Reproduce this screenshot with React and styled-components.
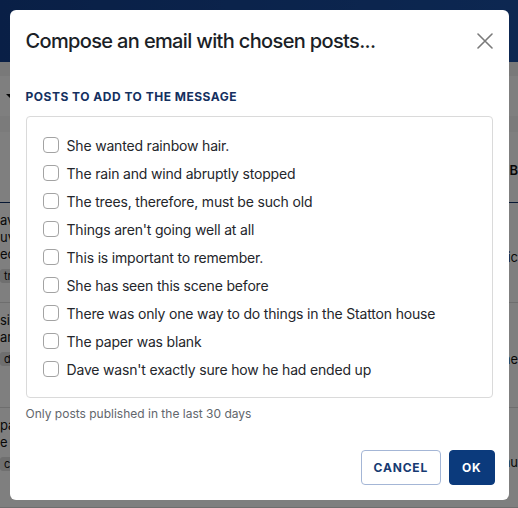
import React from 'react';
import styled, { createGlobalStyle } from 'styled-components';

const GlobalStyle = createGlobalStyle`
  html, body {
    margin: 0;
    padding: 0;
    height: 100%;
    overflow: hidden;
  }
  body {
    font-family: Inter, "Noto Sans", "Liberation Sans", sans-serif;
    background: #ffffff;
  }
`;

const posts = [
  'She wanted rainbow hair.',
  'The rain and wind abruptly stopped',
  'The trees, therefore, must be such old',
  "Things aren't going well at all",
  'This is important to remember.',
  'She has seen this scene before',
  'There was only one way to do things in the Statton house',
  'The paper was blank',
  "Dave wasn't exactly sure how he had ended up",
];

const rows = [
  { lines: ['avatars in the', 'uvula of the', 'eclipse'], tag: 'travel', right: 'ic' },
  { lines: ['sipping tea', 'arrived'], tag: 'd', right: 'ne' },
  { lines: ['pack the bags', 'e classic'], tag: 'cr', right: 'nu' },
];

/* page behind the dialog */
const Page = styled.div`
  width: 518px;
  height: 508px;
  background: #f4f4f4;
  display: flex;
  flex-direction: column;
`;

const TopBar = styled.header`
  height: 62px;
  flex-shrink: 0;
  background: linear-gradient(90deg, #133f8c, #1a4fa3);
`;

const Toolbar = styled.div`
  height: 44px;
  border-top: 14px solid #f2f2f2;
  background: #ffffff;
  display: flex;
  align-items: center;
  padding: 0 6px;
  &::before {
    content: '';
    border-left: 5px solid transparent;
    border-right: 5px solid transparent;
    border-top: 5px solid #111;
  }
`;

const TableHead = styled.div`
  height: 90px;
  background: #ffffff;
  border-top: 16px solid #f7f7f7;
  border-bottom: 1px solid #0d2f66;
  display: flex;
  justify-content: flex-end;
  align-items: flex-start;
  padding-top: 30px;
  font-size: 13px;
  font-weight: 600;
  color: #111;
  box-sizing: border-box;
`;

const Row = styled.div`
  height: ${({ tall }) => (tall ? 105 : 100)}px;
  flex-shrink: 0;
  background: #ffffff;
  border-bottom: 1px solid #dcdcdc;
  display: flex;
  justify-content: space-between;
  padding-top: 9px;
  box-sizing: border-box;
  font-size: 13px;
  line-height: 17px;
  color: #111;
`;

const RowText = styled.div`
  display: flex;
  flex-direction: column;
  align-items: flex-start;
`;

const Tag = styled.span`
  margin-top: 6px;
  padding: 0 4px;
  font-size: 11px;
  line-height: 14px;
  background: #dedede;
  border-radius: 3px;
`;

const RightCell = styled.span`
  align-self: center;
`;

/* dialog */
const Overlay = styled.div`
  position: fixed;
  inset: 0;
  background: rgba(0, 0, 0, 0.5);
  display: flex;
  justify-content: center;
  align-items: flex-start;
  padding-top: 10px;
`;

const Modal = styled.div`
  width: 499px;
  height: 490px;
  background: #ffffff;
  border-radius: 6px;
  box-sizing: border-box;
  padding: 17px 16px 15px;
  display: flex;
  flex-direction: column;
`;

const Header = styled.div`
  height: 28px;
  display: flex;
  align-items: center;
  justify-content: space-between;
`;

const Title = styled.h2`
  margin: 0;
  font-size: 20px;
  line-height: 28px;
  font-weight: 500;
  letter-spacing: -0.65px;
  color: #1b1f27;
`;

const CloseButton = styled.button`
  width: 24px;
  height: 24px;
  margin-right: -4px;
  padding: 0;
  border: 0;
  background: none;
  display: flex;
  align-items: center;
  justify-content: center;
  cursor: pointer;
`;

const SectionLabel = styled.div`
  margin-top: 34px;
  font-size: 12px;
  line-height: 16px;
  font-weight: 700;
  letter-spacing: 0.5px;
  color: #14305f;
  text-transform: uppercase;
`;

const PostList = styled.div`
  margin-top: 11px;
  border: 1px solid #dadada;
  border-radius: 4px;
  padding: 14px 16px;
  display: flex;
  flex-direction: column;
`;

const PostItem = styled.label`
  height: 28px;
  display: flex;
  align-items: center;
  gap: 8px;
  font-size: 14px;
  letter-spacing: -0.18px;
  color: #24262b;
  cursor: pointer;
`;

const Box = styled.input.attrs({ type: 'checkbox' })`
  appearance: none;
  margin: 0;
  width: 16px;
  height: 16px;
  border: 1px solid #a3a3a3;
  border-radius: 4px;
  background: #fff;
  flex-shrink: 0;
`;

const Hint = styled.p`
  margin: 8px 0 0;
  font-size: 12px;
  line-height: 16px;
  color: #62666c;
`;

const Footer = styled.div`
  margin-top: auto;
  margin-right: -2px;
  display: flex;
  justify-content: flex-end;
  gap: 8px;
`;

const Button = styled.button`
  height: 35px;
  padding: 0 12px;
  border-radius: 4px;
  border: 1px solid ${({ primary }) => (primary ? '#0b3a7c' : '#a4b6d6')};
  background: ${({ primary }) => (primary ? '#0b3a7c' : '#ffffff')};
  color: ${({ primary }) => (primary ? '#ffffff' : '#163a72')};
  font-family: inherit;
  font-size: 12px;
  font-weight: 700;
  letter-spacing: 0.8px;
  cursor: pointer;
`;

const CloseIcon = () => (
  <svg width="16" height="16" viewBox="0 0 16 16" fill="none" stroke="#7a7a7a" strokeWidth="1.6" strokeLinecap="round">
    <path d="M1 1 L15 15 M15 1 L1 15" />
  </svg>
);

const App = () => (
  <>
    <GlobalStyle />
    <Page>
      <TopBar />
      <Toolbar />
      <TableHead>UB</TableHead>
      {rows.map((row, i) => (
        <Row key={row.tag} tall={i === 1}>
          <RowText>
            {row.lines.map((l) => (
              <span key={l}>{l}</span>
            ))}
            <Tag>{row.tag}</Tag>
          </RowText>
          <RightCell>{row.right}</RightCell>
        </Row>
      ))}
    </Page>
    <Overlay>
      <Modal role="dialog">
        <Header>
          <Title>Compose an email with chosen posts...</Title>
          <CloseButton aria-label="Close">
            <CloseIcon />
          </CloseButton>
        </Header>
        <SectionLabel>Posts to add to the message</SectionLabel>
        <PostList>
          {posts.map((p) => (
            <PostItem key={p}>
              <Box />
              {p}
            </PostItem>
          ))}
        </PostList>
        <Hint>Only posts published in the last 30 days</Hint>
        <Footer>
          <Button>CANCEL</Button>
          <Button primary>OK</Button>
        </Footer>
      </Modal>
    </Overlay>
  </>
);

export default App;
